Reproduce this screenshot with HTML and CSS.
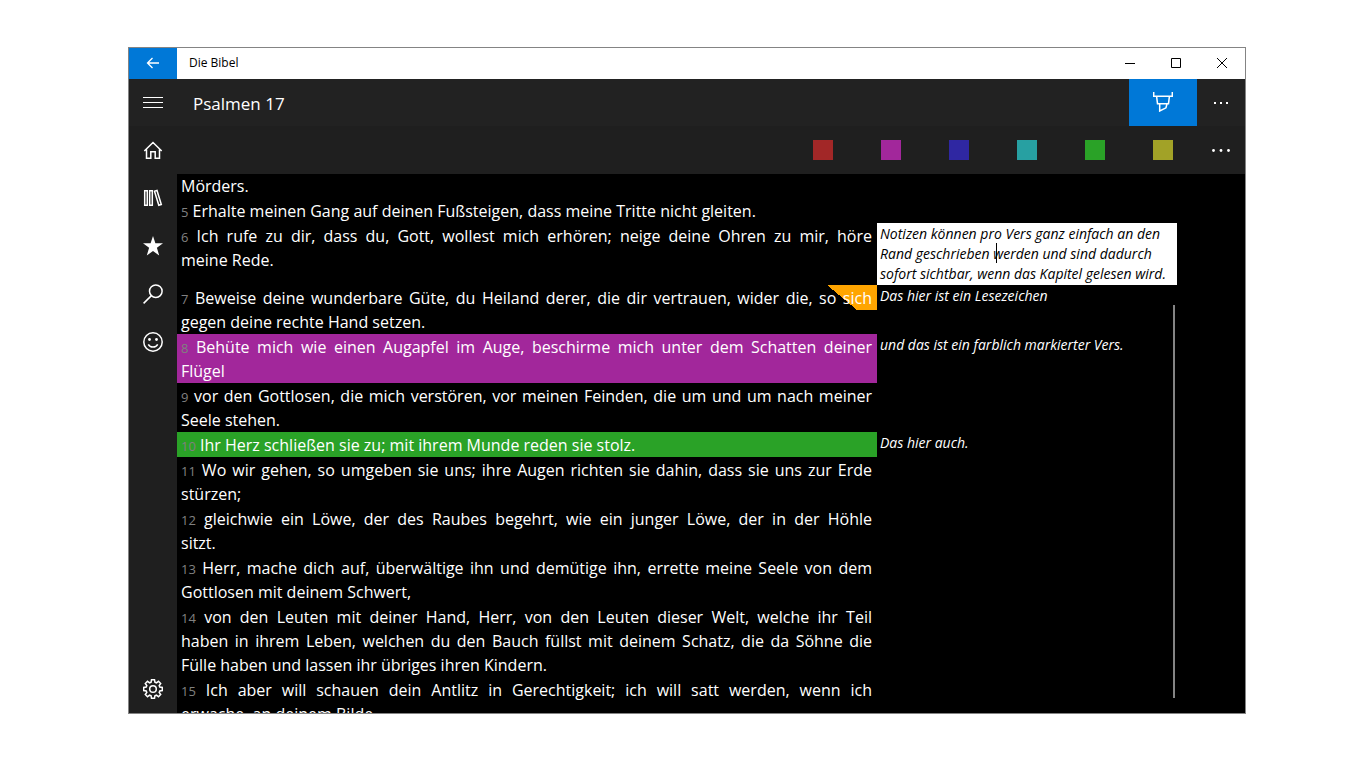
FILE: index.html
```html
<!DOCTYPE html>
<html lang="de">
<head>
    <meta charset="UTF-8">
    <meta name="viewport" content="width=device-width, initial-scale=1.0">
    <title>Die Bibel</title>
    <link rel="stylesheet" href="styles.css">
</head>
<body>

<div class="window">
    <header class="title-bar">
        <button class="back-btn" type="button" aria-label="Zurück">
            <svg width="14" height="12" viewBox="0 0 14 12"><path d="M13 6H1.5M6.5 1L1.5 6l5 5"/></svg>
        </button>
        <h1 class="app-name">Die Bibel</h1>
        <button class="window-btn" type="button" aria-label="Minimieren">
            <svg width="10" height="10" viewBox="0 0 10 10"><path d="M0 5.5h10"/></svg>
        </button>
        <button class="window-btn" type="button" aria-label="Maximieren">
            <svg width="10" height="10" viewBox="0 0 10 10"><path d="M.5 .5h9v9h-9z"/></svg>
        </button>
        <button class="window-btn" type="button" aria-label="Schließen">
            <svg width="10" height="10" viewBox="0 0 10 10"><path d="M0 0l10 10M10 0L0 10"/></svg>
        </button>
    </header>

    <div class="app-bar">
        <button class="icon-btn" type="button" aria-label="Menü">
            <svg width="20" height="20" viewBox="0 0 20 20"><path class="thin" d="M0 4.5h20M0 9.5h20M0 14.5h20"/></svg>
        </button>
        <h2 class="chapter">Psalmen 17</h2>
        <button class="marker-btn" type="button" aria-label="Markieren">
            <svg width="20" height="20" viewBox="0 0 20 20"><path d="M.7 0v4.300h18.600V0M3.600 4.300l.9 7.400h11l.9-7.400M6.700 11.700v7.300l6.300-3.200 1-4.100"/></svg>
        </button>
        <button class="icon-btn" type="button" aria-label="Mehr">
            <svg class="dots" width="14" height="2" viewBox="0 0 14 2"><path d="M0 0h2v2H0zM6 0h2v2H6zM12 0h2v2h-2z"/></svg>
        </button>
    </div>

    <div class="main">
        <nav class="sidebar">
            <a href="#home" aria-label="Start">
                <svg width="20" height="20" viewBox="0 0 20 20"><path d="M1.300 11L10 2.500l8.700 8.500M3.500 9.500v8.700h4.300v-6.400h4.400v6.400h4.300V9.500"/></svg>
            </a>
            <a href="#library" aria-label="Bibliothek">
                <svg width="20" height="20" viewBox="0 0 20 20"><path d="M1.700 2.700h2.600v14.600H1.700zM6.700 2.700h2.600v14.600H6.700zM11.500 3.200l2.500-.700 4.300 14-2.500.800z"/></svg>
            </a>
            <a href="#favorites" aria-label="Favoriten">
                <svg class="solid" width="20" height="20" viewBox="0 0 20 20"><path d="M10 0l2.400 7.200H20l-6.100 4.600 2.300 7.700L10 14.900l-6.200 4.600 2.300-7.700L0 7.200h7.600z"/></svg>
            </a>
            <a href="#search" aria-label="Suchen">
                <svg width="20" height="20" viewBox="0 0 20 20"><circle cx="12.800" cy="7.200" r="6.300"/><path d="M8.400 11.600L.6 19.400"/></svg>
            </a>
            <a href="#feedback" aria-label="Feedback">
                <svg width="20" height="20" viewBox="0 0 20 20"><circle cx="10" cy="10" r="9.200"/><path d="M5.300 12.300c1.800 3.600 7.600 3.600 9.400 0"/><circle class="eye" cx="6.500" cy="7.500" r="1.400"/><circle class="eye" cx="13.500" cy="7.500" r="1.400"/></svg>
            </a>
            <a class="settings" href="#settings" aria-label="Einstellungen">
                <svg width="20" height="20" viewBox="0 0 20 20"><circle cx="10" cy="10" r="3.300"/><path d="M8.500 .700h3l.4 2.500 1.500.6 2.100-1.500 2.200 2.200-1.500 2.100.6 1.500 2.500.4v3l-2.500.4-.6 1.500 1.500 2.100-2.200 2.200-2.100-1.500-1.500.6-.4 2.500h-3l-.4-2.500-1.500-.6-2.100 1.500-2.200-2.200 1.500-2.100-.6-1.500L.7 11.500v-3l2.500-.4.6-1.500-1.500-2.100 2.200-2.200 2.100 1.500 1.500-.6z"/></svg>
            </a>
        </nav>

        <div class="content">
            <div class="color-bar">
                <button class="color-btn" type="button" aria-label="Rot"><span class="swatch red"></span></button>
                <button class="color-btn" type="button" aria-label="Violett"><span class="swatch purple"></span></button>
                <button class="color-btn" type="button" aria-label="Blau"><span class="swatch blue"></span></button>
                <button class="color-btn" type="button" aria-label="Türkis"><span class="swatch teal"></span></button>
                <button class="color-btn" type="button" aria-label="Grün"><span class="swatch green"></span></button>
                <button class="color-btn" type="button" aria-label="Gelb"><span class="swatch yellow"></span></button>
                <button class="icon-btn" type="button" aria-label="Mehr Farben">
                    <svg class="dots" width="18" height="3" viewBox="0 0 18 3"><circle cx="1.500" cy="1.500" r="1.400"/><circle cx="9" cy="1.500" r="1.400"/><circle cx="16.500" cy="1.500" r="1.400"/></svg>
                </button>
            </div>

            <div class="reader">
                <div class="row">
                    <p class="verse rest">Mörders.</p>
                </div>
                <div class="row">
                    <p class="verse"><span class="num">5</span> Erhalte meinen Gang auf deinen Fußsteigen, dass meine Tritte nicht gleiten.</p>
                </div>
                <div class="row">
                    <p class="verse"><span class="line"><span class="num">6</span> Ich rufe zu dir, dass du, Gott, wollest mich erhören; neige deine Ohren zu mir, höre</span> meine Rede.</p>
                    <div class="note-edit">
                        <textarea class="note" rows="3" aria-label="Notiz zu Vers 6" spellcheck="false">Notizen können pro Vers ganz einfach an den Rand geschrieben werden und sind dadurch sofort sichtbar, wenn das Kapitel gelesen wird.</textarea>
                        <span class="caret"></span>
                    </div>
                </div>
                <div class="row">
                    <p class="verse bookmark"><span class="num">7</span> Beweise deine wunderbare Güte, du Heiland derer, die dir vertrauen, wider die, so sich gegen deine rechte Hand setzen.</p>
                    <p class="note">Das hier ist ein Lesezeichen</p>
                </div>
                <div class="row">
                    <p class="verse purple"><span class="num">8</span> Behüte mich wie einen Augapfel im Auge, beschirme mich unter dem Schatten deiner Flügel</p>
                    <p class="note">und das ist ein farblich markierter Vers.</p>
                </div>
                <div class="row">
                    <p class="verse"><span class="num">9</span> vor den Gottlosen, die mich verstören, vor meinen Feinden, die um und um nach meiner Seele stehen.</p>
                </div>
                <div class="row">
                    <p class="verse green"><span class="num">10</span> Ihr Herz schließen sie zu; mit ihrem Munde reden sie stolz.</p>
                    <p class="note">Das hier auch.</p>
                </div>
                <div class="row">
                    <p class="verse"><span class="num">11</span> Wo wir gehen, so umgeben sie uns; ihre Augen richten sie dahin, dass sie uns zur Erde stürzen;</p>
                </div>
                <div class="row">
                    <p class="verse"><span class="line"><span class="num">12</span> gleichwie ein Löwe, der des Raubes begehrt, wie ein junger Löwe, der in der Höhle</span> sitzt.</p>
                </div>
                <div class="row">
                    <p class="verse"><span class="num">13</span> Herr, mache dich auf, überwältige ihn und demütige ihn, errette meine Seele von dem Gottlosen mit deinem Schwert,</p>
                </div>
                <div class="row">
                    <p class="verse"><span class="line"><span class="num">14</span> von den Leuten mit deiner Hand, Herr, von den Leuten dieser Welt, welche ihr Teil</span> <span class="line">haben in ihrem Leben, welchen du den Bauch füllst mit deinem Schatz, die da Söhne die</span> Fülle haben und lassen ihr übriges ihren Kindern.</p>
                </div>
                <div class="row">
                    <p class="verse"><span class="line"><span class="num">15</span> Ich aber will schauen dein Antlitz in Gerechtigkeit; ich will satt werden, wenn ich</span> erwache, an deinem Bilde.</p>
                </div>
                <span class="scroll-thumb"></span>
            </div>
        </div>
    </div>
</div>

</body>
</html>
```
FILE: styles.css
```css
* {
    margin: 0;
    padding: 0;
    box-sizing: border-box;
}

body {
    font-family: "Open Sans", "Noto Sans", sans-serif;
    background-color: #fff;
    height: 100vh;
    padding: 47px 120px 54px 128px;
}

button {
    border: none;
    background: none;
    color: inherit;
    cursor: pointer;
}

button,
.sidebar a {
    display: flex;
    justify-content: center;
    align-items: center;
    flex-shrink: 0;
}

svg {
    display: block;
    fill: none;
    stroke: currentColor;
    stroke-width: 1.5;
}

.thin {
    stroke-width: 1;
}

.dots,
.solid,
.eye {
    fill: currentColor;
    stroke: none;
}

.window {
    height: 100%;
    display: flex;
    flex-direction: column;
    border: 1px solid #848484;
    background-color: #000;
    color: #fff;
}

/* title bar */
.title-bar {
    display: flex;
    height: 31px;
    background-color: #fff;
    color: #000;
}

.title-bar button {
    padding-bottom: 2px;
}

.back-btn {
    width: 48px;
    background-color: #0078d7;
    color: #fff;
}

.back-btn svg {
    stroke-width: 1.3;
}

.app-name {
    flex: 1;
    padding-left: 12px;
    font-size: 12px;
    font-weight: 400;
    line-height: 30px;
}

.window-btn {
    width: 46px;
}

.window-btn svg {
    stroke-width: 1;
}

/* app bar */
.app-bar {
    display: flex;
    height: 47px;
    background-color: #222;
}

.icon-btn {
    width: 48px;
}

.chapter {
    flex: 1;
    padding-left: 16px;
    font-size: 17px;
    font-weight: 400;
    line-height: 50px;
}

.marker-btn {
    width: 68px;
    padding-bottom: 2px;
    background-color: #0078d7;
}

.main {
    flex: 1;
    display: flex;
    min-height: 0;
}

.sidebar {
    width: 48px;
    display: flex;
    flex-direction: column;
    background-color: #1f1f1f;
}

.sidebar a {
    height: 48px;
    color: #fff;
}

.sidebar .settings {
    margin-top: auto;
}

.content {
    flex: 1;
    display: flex;
    flex-direction: column;
    min-width: 0;
}

.color-bar {
    display: flex;
    justify-content: flex-end;
    height: 48px;
    flex-shrink: 0;
    background-color: #1f1f1f;
}

.color-btn {
    width: 68px;
}

.swatch {
    width: 20px;
    height: 20px;
}

.red { background-color: #a22727; }
.purple { background-color: #a2279b; }
.blue { background-color: #2f27a2; }
.teal { background-color: #27a0a2; }
.green { background-color: #2aa227; }
.yellow { background-color: #a2a227; }

/* verses and notes */
.reader {
    flex: 1;
    position: relative;
    min-height: 0;
    padding-right: 68px;
    overflow: hidden;
}

.row {
    display: grid;
    grid-template-columns: 7fr 3fr;
    align-items: start;
}

.verse {
    padding: 1px 5px 0 4px;
    font-size: 16px;
    line-height: 24px;
    text-align: justify;
}

.rest {
    padding-top: 0;
}

.line {
    display: block;
    text-align-last: justify;
}

.num {
    font-size: 13px;
    line-height: 1;
    color: #808080;
}

/* orange ribbon in the top right corner */
.bookmark {
    background-image: linear-gradient(#ffa500, #ffa500), linear-gradient(to top right, transparent 50%, #ffa500 50%);
    background-position: right top, right 20px top;
    background-size: 20px 25px, 30px 25px;
    background-repeat: no-repeat;
}

.note {
    padding: 1px 3px;
    font-size: 14px;
    font-style: italic;
    line-height: 20px;
}

.note-edit {
    position: relative;
    height: 62px;
}

textarea.note {
    display: block;
    width: 100%;
    height: 100%;
    border: none;
    outline: none;
    resize: none;
    overflow: hidden;
    background-color: #fff;
    color: #000;
    font-family: inherit;
}

.caret {
    position: absolute;
    left: 119px;
    top: 20px;
    width: 1px;
    height: 20px;
    background-color: #000;
}

.scroll-thumb {
    position: absolute;
    top: 131px;
    bottom: 15px;
    right: 70px;
    width: 2px;
    background-color: #848484;
}
```
